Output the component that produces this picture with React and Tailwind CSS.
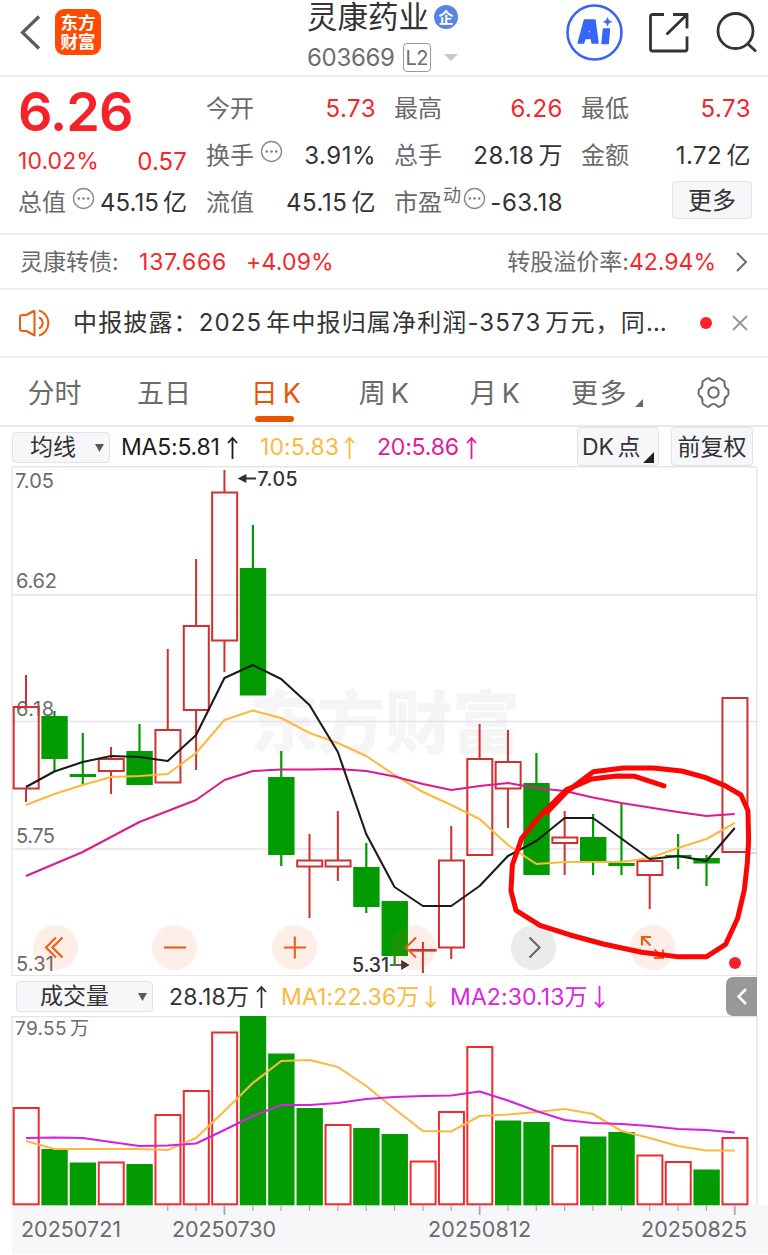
import React from 'react';

const STEP = 28.35;
const cx = (i) => 26 + STEP * i;

// [rising, body top, body bottom, wick top, wick bottom]
const CANDLES = [
  [1, 707, 788.5, 675, 802],
  [0, 716, 759, 711, 771],
  [0, 774, 777, 733, 785],
  [1, 759, 771, 747, 794],
  [0, 751, 785, 724, 785],
  [1, 730, 782.5, 649, 782],
  [1, 626, 710, 559, 770],
  [1, 492.5, 640.5, 470, 672],
  [0, 568, 695.5, 525, 695],
  [0, 777, 855, 751, 866],
  [1, 860.5, 866.5, 834, 918],
  [1, 860.5, 866.5, 811, 881],
  [0, 867, 907, 843, 913],
  [0, 901, 956, 901, 964],
  [1, 950, 950.6, 942, 973],
  [1, 860.5, 947.5, 826, 959],
  [1, 759, 855, 724, 855],
  [1, 762, 788.5, 730, 828],
  [0, 783, 875, 753, 875],
  [1, 837.5, 843, 811, 875],
  [0, 837, 861, 814, 875],
  [0, 863, 866, 803, 875],
  [1, 861, 875, 861, 909],
  [0, 855, 857.5, 834, 869],
  [0, 858, 863.5, 855, 886],
  [1, 698, 852, 698, 852],
];
const MA5 = [787, 771.5, 762, 756, 757, 761, 735, 678, 665, 679, 705, 752, 834, 887, 906, 906, 886, 856, 841, 818, 818, 838.5, 859, 856, 861, 828];
const MA10 = [805, 794, 785, 777, 776, 774, 753, 720, 710.5, 718, 733, 743, 756, 775, 792, 805, 819, 845, 864, 862, 862, 862, 858, 848, 839, 823];
const MA20 = [876, 864, 852, 837, 822, 811, 800, 780, 771, 769.5, 769.5, 769, 771, 776.5, 784, 790, 786, 783, 788, 791, 797.5, 803, 807.5, 812, 816, 814];

const VOLUMES = [1108, 1149, 1162.5, 1162.5, 1164, 1115, 1091, 1032.5, 1016, 1053.5, 1108, 1125, 1128, 1134, 1161.5, 1112, 1047, 1120.5, 1122, 1146, 1136.5, 1132, 1155.5, 1162, 1169.5, 1138];
const VOL_UP = [1, 0, 0, 1, 0, 1, 1, 1, 0, 0, 0, 1, 0, 0, 1, 1, 1, 0, 0, 1, 0, 0, 1, 1, 0, 1];
const VMA1 = [1141, 1149, 1149, 1149, 1149, 1150, 1138, 1111, 1083, 1061, 1060, 1067, 1086, 1109, 1131, 1131.5, 1116, 1114.5, 1112, 1109, 1114, 1131, 1138, 1146, 1150.5, 1150.5];
const VMA2 = [1138, 1137.5, 1138, 1142, 1146, 1145.5, 1143.5, 1130, 1116, 1105, 1105, 1103, 1099, 1097, 1096, 1095.5, 1091.5, 1100.5, 1111, 1120, 1123, 1124, 1126, 1129, 1130, 1132.5];

const points = (ys) => ys.map((y, i) => `${cx(i)},${y}`).join(' ');

function Line({ ys, color }) {
  return <polyline points={points(ys)} fill="none" stroke={color} strokeWidth="2.1" strokeLinejoin="round" />;
}

function Label({ x, y, w, children, size = 20, fill = '#6b6b6b', weight = 400 }) {
  return (
    <text x={x} y={y} textLength={w} fontSize={size} fill={fill} fontWeight={weight}>
      {children}
    </text>
  );
}

function Candle({ i, d }) {
  const [up, top, bottom, high, low] = d;
  const x = cx(i);
  if (!up) {
    return (
      <g fill="#029c02">
        <rect x={x - 13} y={top} width="26.4" height={bottom - top} />
        <rect x={x - 1} y={high} width="2.2" height={low - high} />
      </g>
    );
  }
  return (
    <g stroke="#d0302f" strokeWidth="2" fill="none">
      <path d={`M${x} ${high}V${top}M${x} ${bottom}V${low}`} />
      <rect x={x - 12.3} y={top} width="25" height={bottom - top} />
    </g>
  );
}

function PriceChart() {
  return (
    <svg className="block h-[510px] w-[768px]" viewBox="0 466 768 510">
      <text x="250" y="748" textLength="270" fontSize="68" fontWeight="900" fill="#f5f5f6">东方财富</text>
      <path d="M12 595H757M12 721.5H757M12 849H757" stroke="#e3e3ec" strokeWidth="1.6" />
      <path d="M12 976V466.7H756.7V976M12 975.7H756" stroke="#e6e6ea" strokeWidth="1.4" fill="none" />
      <Label x="15" y="488" w="39">7.05</Label>
      <Label x="16" y="588" w="41">6.62</Label>
      <Label x="16" y="716" w="38">6.18</Label>
      <Label x="16" y="843" w="39">5.75</Label>
      <Label x="16" y="971" w="38">5.31</Label>
      {CANDLES.map((d, i) => <Candle key={i} i={i} d={d} />)}
      <Line ys={MA10} color="#fbb93f" />
      <Line ys={MA20} color="#dc1b8c" />
      <Line ys={MA5} color="#1b1b1b" />
      <path d="M748 853H757" stroke="#dadae2" strokeWidth="2" />
      <path d="M246 478.5H256M239.5 478.5l6-3v6z" stroke="#333" strokeWidth="1.8" fill="#333" />
      <Label x="257.5" y="486" w="40" size="19.5" fill="#333" weight="500">7.05</Label>
      <Label x="352" y="972" w="37" size="19.5" fill="#333" weight="500">5.31</Label>
      <path d="M390 965H402M408 965l-6-3.5v7z" stroke="#333" strokeWidth="1.6" fill="#333" />
      <circle cx="735" cy="963" r="6" fill="#f5222d" />
    </svg>
  );
}

function Annotation() {
  return (
    <svg className="pointer-events-none absolute inset-0 h-[510px] w-[768px]" viewBox="0 466 768 510">
      <polyline
        transform="translate(460 690) scale(.3333)"
        points="260,368 320,305 400,245 490,234 580,234 665,243 735,262 795,287 843,315 864,362 866,450 862,520 853,600 833,685 797,763 740,800 650,800 545,787 430,762 330,735 240,706 168,661 153,603 157,525 185,445 245,372 320,299 395,267 470,258 525,259 612,288"
        fill="none"
        stroke="#fb0505"
        strokeWidth="15"
        strokeLinecap="round"
        strokeLinejoin="round"
      />
    </svg>
  );
}

function RoundButton({ children, gray }) {
  return (
    <button className={`flex size-[45px] items-center justify-center rounded-full ${gray ? 'bg-[#ebebeb]' : 'bg-[#ee5a10]/10'}`}>
      <svg width="45" height="45" viewBox="0 0 45 45" fill="none" stroke={gray ? '#666' : '#ee5d18'} strokeWidth="2.1">
        {children}
      </svg>
    </button>
  );
}

function VolumeChart() {
  return (
    <svg className="block h-[239px] w-[768px]" viewBox="0 1016 768 239">
      <rect x="12" y="1205" width="756" height="49" fill="#f7f7f9" />
      <path d="M12 1205V1016.5H757V1205" stroke="#e3e3e8" strokeWidth="1.4" fill="none" />
      <text x="15" y="1035" fontSize="19" letterSpacing="0.35" wordSpacing="-2.5" fill="#6b6b6b">79.55 万</text>
      {VOLUMES.map((y, i) =>
        VOL_UP[i] ? (
          <rect key={i} x={cx(i) - 12.3} y={y} width="25" height={1204.3 - y} fill="none" stroke="#ee2c30" strokeWidth="2" />
        ) : (
          <rect key={i} x={cx(i) - 13} y={y} width="26.4" height={1205.3 - y} fill="#029c02" />
        ),
      )}
      <Line ys={VMA1} color="#fbb93f" />
      <Line ys={VMA2} color="#d621dc" />
      {VOLUMES.map((_, i) =>
        i > 4 ? (
          <path key={i} d={`M${cx(i)} 1205.5V${i % 9 === 7 ? 1215 : 1211}`} stroke="#a9a9ad" strokeWidth={i % 9 === 7 ? 1.8 : 1.2} />
        ) : null,
      )}
      <Label x="21" y="1236.500" w="100" size="21.500">20250721</Label>
      <Label x="172" y="1236.500" w="104" size="21.500">20250730</Label>
      <Label x="428" y="1236.500" w="103" size="21.500">20250812</Label>
      <Label x="641" y="1236.500" w="106" size="21.500">20250825</Label>
    </svg>
  );
}

function Dots() {
  return (
    <svg className="mb-[9px] size-[23px] shrink-0" viewBox="0 0 23 23">
      <circle cx="11.5" cy="11.5" r="10" fill="none" stroke="#8b8b8b" strokeWidth="1.4" />
      <g fill="#808080">
        <circle cx="6.8" cy="11.5" r="1.3" />
        <circle cx="11.5" cy="11.5" r="1.3" />
        <circle cx="16.2" cy="11.5" r="1.3" />
      </g>
    </svg>
  );
}

function Cell({ label, value, red, icon, sup, tight }) {
  return (
    <div className="flex h-[47px] items-center whitespace-nowrap text-2xl">
      <span className="text-[#6a6a6a]">{label}</span>
      {sup && <span className="mb-[14px] ml-px text-lg leading-none text-[#6a6a6a]">{sup}</span>}
      {icon && <span className={sup ? 'ml-0.5' : 'ml-[6px]'}><Dots /></span>}
      <span className={`ml-auto [word-spacing:-3px] ${tight ? 'tracking-[0.1px]' : 'mr-[-1px] tracking-[0.5px]'} ${red ? 'text-[#f5262b]' : 'text-[#333]'}`}>{value}</span>
    </div>
  );
}

function Header() {
  return (
    <header className="flex h-[77px] border-b-2 border-[#eeeeef]">
      <div className="flex w-[307px] items-start">
        <svg className="ml-[20px] mt-[15px] h-[35px] w-[22px]" viewBox="0 0 22 35" fill="none" stroke="#5c5c5c" strokeWidth="3.2">
          <path d="M19 1.5L2.5 17.5 19 33.5" />
        </svg>
        <div className="ml-[13px] mt-[9px] flex size-[46px] flex-col items-center justify-center rounded-[9px] bg-[#ff4a04] text-[17.5px] font-bold leading-[19px] text-white">
          <span>东方</span>
          <span>财富</span>
        </div>
      </div>
      <div className="w-[220px] whitespace-nowrap">
        <div className="flex h-[34px] items-center">
          <span className="text-[30.5px] leading-[34px] text-[#333]">灵康药业</span>
          <span className="ml-[5px] flex size-6 items-center justify-center rounded-full bg-[#5685e6] text-[15px] font-bold leading-none text-white">企</span>
        </div>
        <div className="mt-[9px] flex h-[29px] items-center text-[#6e6e6e]">
          <span className="text-2xl tracking-[-0.3px]">603669</span>
          <span className="ml-[8px] flex h-[29px] w-[28px] items-center justify-center rounded-[4px] border-[1.5px] border-[#999] text-xl tracking-tight">L2</span>
          <svg className="ml-[13px] h-[7px] w-[14px]" viewBox="0 0 14 7"><path d="M0 0h14L7 7z" fill="#c8c8c8" /></svg>
        </div>
      </div>
      <div className="flex items-start">
        <svg className="ml-[39px] mt-[4px] size-[57px]" viewBox="0 0 57 57">
          <circle cx="28.5" cy="28.5" r="27" fill="none" stroke="#3865f8" strokeWidth="2.6" />
          <g fill="#3865f8" stroke="#3865f8" strokeLinejoin="round">
            <path fillRule="evenodd" strokeWidth="1.5" d="M18.5 16h10.500l3 23h-6l-.6-4.500h-6.200L17.500 39h-5.300zM23.500 23l-2 6h3.200z" />
            <path strokeWidth="1.5" d="M37.500 25h6l-1.300 14.500h-6.200z" />
            <path strokeWidth=".5" d="M41.500 13.500l1.300 3 3 1.300-3 1.300-1.300 3-1.300-3-3-1.300 3-1.300z" />
          </g>
        </svg>
        <svg className="ml-[25px] mt-[12px] size-[42px]" viewBox="0 0 42 42" fill="none" stroke="#333" strokeWidth="2.8">
          <path d="M16 2.500H4.500a2 2 0 0 0-2 2V37a2 2 0 0 0 2 2H37a2 2 0 0 0 2-2V24.500M25 2.500H39V16.500M38.500 3L18.500 22.500" />
        </svg>
        <svg className="ml-[26px] mt-[11px] size-[42px]" viewBox="0 0 42 42" fill="none" stroke="#333" strokeWidth="2.8">
          <circle cx="19.500" cy="20" r="17.500" />
          <path d="M31.500 32.500L40 40.500" />
        </svg>
      </div>
    </header>
  );
}

function Quote() {
  return (
    <section className="grid h-[158px] grid-cols-[169px_169px_168px_169px] gap-x-[19px] border-b-2 border-[#eeeeef] pl-[18px] pt-[8px]">
      <div>
        <div className="flex h-[47px] items-center text-[54px] font-semibold leading-none tracking-[-0.9px] text-[#f5222a]">
          <span className="mt-[6px]">6.26</span>
        </div>
        <div className="flex h-[47px] items-center justify-between pt-[12px] text-[23px] tracking-[0.1px] text-[#f5262b]">
          <span>10.02%</span>
          <span className="text-2xl tracking-[0.1px]">0.57</span>
        </div>
        <Cell label="总值" icon tight value="45.15 亿" />
      </div>
      <div>
        <Cell label="今开" value="5.73" red />
        <Cell label="换手" icon value="3.91%" />
        <Cell label="流值" value="45.15 亿" />
      </div>
      <div>
        <Cell label="最高" value="6.26" red />
        <Cell label="总手" value="28.18 万" />
        <Cell label="市盈" sup="动" icon value="-63.18" />
      </div>
      <div>
        <Cell label="最低" value="5.73" red />
        <Cell label="金额" value="1.72 亿" />
        <div className="flex justify-end">
          <button className="mr-[-2px] mt-[2px] flex h-[38px] w-[80px] items-center justify-center rounded-[4px] border-[1.5px] border-[#e3e4e8] bg-[#f6f7f9] pt-px text-2xl text-[#333]">更多</button>
        </div>
      </div>
    </section>
  );
}

const TABS = [
  ['分时', 'w-[55px]', 'ml-[27px]'],
  ['五日', 'w-[54px]', 'ml-[55px]'],
  ['日 K', 'w-[50px]', 'ml-[60px]'],
  ['周 K', 'w-[50px]', 'ml-[58px]'],
  ['月 K', 'w-[50px]', 'ml-[61px]'],
  ['更多', 'w-[57px]', 'ml-[51px]'],
];

function Tabs() {
  return (
    <nav className="flex h-[69px] items-start whitespace-nowrap border-b-2 border-[#e6e6ed] text-[27px] text-[#6a6a6a]">
      {TABS.map(([name, w, ml], i) => (
        <div key={name} className={`${w} ${ml} flex shrink-0 flex-col items-center pt-[16px] ${i === 2 ? 'text-[#ea5504]' : ''}`}>
          <span className={`leading-[40px] ${i === 5 ? 'tracking-[1.5px]' : i > 1 ? 'tracking-[0.2px] [word-spacing:-3px]' : ''}`}>{name}</span>
          {i === 2 && <span className="mr-[3px] mt-[2px] h-[6px] w-[39px] rounded-full bg-[#ea5504]" />}
        </div>
      ))}
      <svg className="ml-[7px] mt-[41px] h-[8px] w-[8px] shrink-0" viewBox="0 0 8 8"><path d="M8 0v8H0z" fill="#6a6a6a" /></svg>
      <svg className="ml-[54px] mt-[18px] size-[33px] shrink-0" viewBox="0 0 33 33" fill="none" stroke="#6a6a6a" strokeWidth="2" strokeLinejoin="round">
        <path d="M10 2.500Q12 1.500 13 3.500Q16.500 6.500 20 3.500Q21 1.500 23 2.500L27 5Q28 6 27.500 8Q27.500 12 30.500 13Q31.500 13.500 31.500 16.500T30.500 20Q27.500 21 27.500 25Q28 27 27 28L23 30.500Q21 31.500 20 29.500Q16.500 26.500 13 29.500Q12 31.500 10 30.500L6 28Q5 27 5.500 25Q5.500 21 2.500 20Q1.500 19.500 1.500 16.500T2.500 13Q5.500 12 5.500 8Q5 6 6 5Z" />
        <circle cx="16.500" cy="16.500" r="5.200" />
      </svg>
    </nav>
  );
}

function Arrow({ up, className }) {
  return (
    <svg className={`h-[22px] w-[11px] shrink-0 ${className}`} viewBox="0 0 11 22" fill="none" stroke="currentColor" strokeWidth="1.8">
      <path d={up ? 'M5.500 22V1M1 6L5.500 1L10 6' : 'M5.500 0V21M1 16L5.500 21L10 16'} />
    </svg>
  );
}

function Caret() {
  return <svg className="h-[8px] w-[9px]" viewBox="0 0 9 8"><path d="M0 0h9L4.500 8z" fill="#5a5a5a" /></svg>;
}

export default function App() {
  return (
    <div className="h-[1255px] w-[768px] overflow-hidden bg-white font-['Inter','Noto_Sans_CJK_SC',sans-serif]">
      <Header />
      <Quote />
      <section className="flex h-[55px] items-center whitespace-nowrap border-b-2 border-[#eeeeef] px-5 pt-px text-[23px]">
        <span className="w-[119px] text-[23px] text-[#6a6a6a]">灵康转债:</span>
        <span className="w-[107px] tracking-[0.8px] text-[#f5262b]">137.666</span>
        <span className="tracking-[0.2px] text-[#f5262b]">+4.09%</span>
        <span className="ml-auto text-[23px] text-[#6a6a6a]">转股溢价率:</span>
        <span className="text-[#f5262b]">42.94%</span>
        <svg className="ml-[20px] h-[20px] w-[12px]" viewBox="0 0 12 20" fill="none" stroke="#6a6a6a" strokeWidth="2"><path d="M1 1l9 9-9 9" /></svg>
      </section>
      <section className="flex h-[68px] items-center whitespace-nowrap border-b-2 border-[#eeeeef] pl-[19px]">
        <svg className="h-[28px] w-[33px]" viewBox="0 0 33 28" fill="none" stroke="#ee5d12" strokeWidth="2.1" strokeLinejoin="round">
          <path d="M15.500 1.500V26.500L7.500 22H3.500Q1 22 1 19.500V8.500Q1 6 3.500 6H7.500L15.500 1.500M20 8.500A6 6 0 0 1 20 19.500M20 1.500A13 13 0 0 1 20 26.500" />
        </svg>
        <span className="ml-[21px] w-[597px] text-[24px] tracking-[1.15px] text-[#333] [word-spacing:-4px]">中报披露：2025 年中报归属净利润-3573 万元，同…</span>
        <span className="ml-[30px] size-3 rounded-full bg-[#f5222a]" />
        <svg className="ml-[20px] size-4" viewBox="0 0 16 16" stroke="#999" strokeWidth="2"><path d="M1 1l14 14M15 1L1 15" /></svg>
      </section>
      <Tabs />
      <div className="flex h-[39px] items-start whitespace-nowrap text-[23px] leading-none">
        <button className="ml-[12px] mt-[5px] flex h-[31px] w-[98px] items-center justify-between rounded-[4px] border-[1.500px] border-[#e1e2e8] bg-[#f6f7f9] pl-[17px] pr-[5px] text-[#333]">均线<Caret /></button>
        <div className="flex h-[39px] w-[467px] items-center pt-[2px] text-[#1d1d1d]">
          <span className="ml-[11px] w-[100px] tracking-[-0.2px]">MA5:5.81</span>
          <Arrow up className="ml-[6px]" />
          <span className="ml-[22px] w-[79px] tracking-[0.1px] text-[#fbb93f]">10:5.83</span>
          <Arrow up className="ml-[5px] text-[#fbb93f]" />
          <span className="ml-[22px] w-[82px] tracking-[-0.2px] text-[#e01b94]">20:5.86</span>
          <Arrow up className="ml-[7px] text-[#e01b94]" />
        </div>
        <button className="flex h-[39px] w-[82px] items-center rounded-[4px] border-[1.500px] border-[#e1e2e8] bg-[#f6f7f9] pl-[4px] pt-px text-[#333]">
          <span className="w-[59px] text-left [word-spacing:-3px]">DK 点</span>
          <svg className="ml-[2px] mt-[21px] size-[11px] shrink-0" viewBox="0 0 11 11"><path d="M11 0v11H0z" fill="#222" /></svg>
        </button>
        <button className="ml-[12px] flex h-[39px] w-[82px] items-center justify-center rounded-[4px] border-[1.500px] border-[#e1e2e8] bg-[#f6f7f9] pt-px text-[#333]">前复权</button>
      </div>
      <div className="relative h-[510px]">
        <PriceChart />
        <div className="absolute left-[33px] top-[459px] flex w-[642px] justify-between">
          <RoundButton><path d="M23 12.500l-10 10 10 10M29.500 12.500l-10 10 10 10" /></RoundButton>
          <RoundButton><path d="M12 22.500h22" /></RoundButton>
          <RoundButton><path d="M12 22.500h22M22.800 11.500v22" /></RoundButton>
          <RoundButton><path d="M25 12.500l-10 10 10 10" /></RoundButton>
          <RoundButton gray><path d="M18.500 12.500l10 10-10 10" /></RoundButton>
          <RoundButton><path d="M12 20.500V12h9M12 12l8.500 8.500M33 24.500V33h-9M33 33l-8.500-8.500" /></RoundButton>
        </div>
        <Annotation />
      </div>
      <div className="flex h-[40px] items-center whitespace-nowrap text-[23px] leading-none">
        <button className="ml-[16px] mt-px flex h-[31px] w-[137px] items-center justify-between rounded-[4px] border-[1.500px] border-[#e1e2e8] bg-[#f6f7f9] pl-[23px] pr-[5px] text-[#333]">成交量<Caret /></button>
        <div className="mt-[2px] flex items-center">
          <span className="ml-[16px] w-[80px] tracking-[0.2px] text-[#333]">28.18万</span>
          <Arrow up className="ml-[7px] text-[#333]" />
          <span className="ml-[14px] w-[137px] tracking-[0.1px] text-[#fbb93f]">MA1:22.36万</span>
          <Arrow className="ml-[7px] text-[#fbb93f]" />
          <span className="ml-[14px] w-[138px] tracking-[0.1px] text-[#dc25e0]">MA2:30.13万</span>
          <Arrow className="ml-[6px] text-[#dc25e0]" />
        </div>
        <button className="ml-auto mr-[11px] flex h-[39px] w-[31px] items-center justify-center rounded-l-[7px] bg-[#989898]">
          <svg className="h-[17px] w-[10px]" viewBox="0 0 10 17" fill="none" stroke="#fff" strokeWidth="2.600"><path d="M9 1L1.500 8.500 9 16" /></svg>
        </button>
      </div>
      <VolumeChart />
    </div>
  );
}
